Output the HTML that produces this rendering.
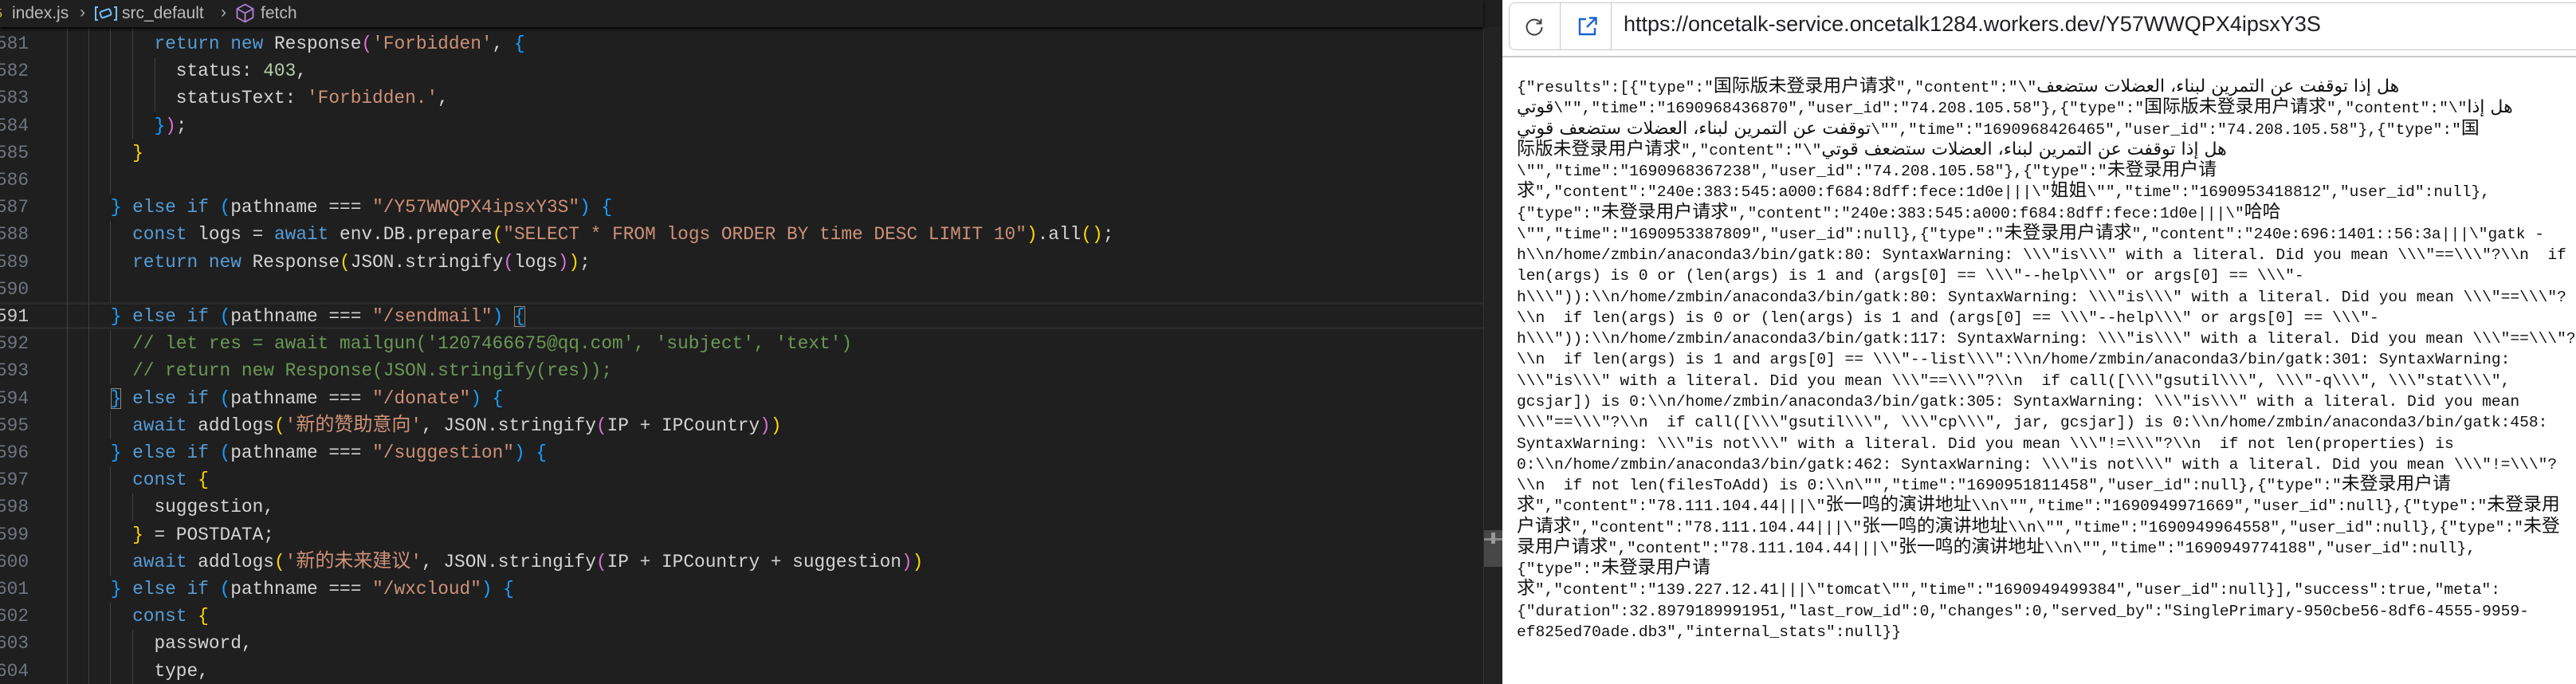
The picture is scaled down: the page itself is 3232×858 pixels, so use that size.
<!DOCTYPE html>
<html><head><meta charset="utf-8"><style>
*{margin:0;padding:0;box-sizing:border-box}
html,body{width:3232px;height:858px;overflow:hidden;background:#1f1f1f;position:relative}
.abs{position:absolute}
#tab{left:0;top:0;width:1861px;height:34px;background:#1f1f1f;box-shadow:0 2px 4px #000;z-index:2;font-family:"Liberation Sans",sans-serif;font-size:21px;color:#bbb}
#ln{left:-20px;top:38px;width:56px;text-align:right;font-family:"Liberation Mono",monospace;font-size:22.8px;line-height:34.2px;color:#6e7681;white-space:pre}
#code{left:84px;top:38px;font-family:"Liberation Mono","Noto Sans CJK SC",monospace;font-size:22.8px;line-height:34.2px;color:#d4d4d4;white-space:pre}
.g{width:1px;background:#404040}
.k{color:#569cd6}.s{color:#ce9178}.n{color:#b5cea8}.c{color:#6a9955}.y{color:#ffd700}.p{color:#da70d6}.b{color:#179fff}
.cj{font-family:"Noto Sans CJK SC",sans-serif;font-size:24px;line-height:0}
.box{outline:1.5px solid #888;outline-offset:-1px}
#br{left:1885px;top:0;width:1347px;height:858px;background:#fff}
#json{left:1903px;top:97px;font-family:"Liberation Mono","Noto Sans CJK SC",monospace;font-size:19.6px;line-height:26.27px;color:#111;white-space:pre}
#json .z{font-family:"Noto Sans CJK SC",sans-serif;font-size:22.9px;line-height:0}
#json .a{font-family:"DejaVu Sans",sans-serif;font-size:22px;line-height:0}
</style></head><body>
<div id="tab" class="abs">
 <div class="abs" style="left:-6px;top:9px;width:10px;height:16px;color:#cbcb41;font-size:16px">5</div>
 <div class="abs" style="left:15px;top:5px">index.js</div>
 <div class="abs" style="left:100px;top:4px;color:#aaa">›</div>
 <svg class="abs" style="left:119px;top:7px" width="28" height="20" viewBox="0 0 28 20"><path d="M4 2H1v16h3M24 2h3v16h-3" stroke="#75beff" stroke-width="2" fill="none"/><rect x="7" y="6" width="13" height="8" rx="2" transform="rotate(-20 13 10)" stroke="#75beff" stroke-width="2" fill="none"/></svg>
 <div class="abs" style="left:153px;top:5px">src_default</div>
 <div class="abs" style="left:277px;top:4px;color:#aaa">›</div>
 <svg class="abs" style="left:296px;top:4px" width="23" height="25" viewBox="0 0 23 25"><path d="M11.5 1.5 21.5 7v11l-10 5.5-10-5.5V7zM1.5 7l10 5.5L21.5 7M11.5 12.5v11" stroke="#b180d7" stroke-width="1.8" fill="none"/></svg>
 <div class="abs" style="left:327px;top:5px">fetch</div>
</div>
<div class="abs" style="left:0;top:379px;width:1861px;height:34px;border-top:3px solid #2a2a2a;border-bottom:3px solid #2a2a2a"></div>
<div class="abs g" style="left:84px;top:34px;height:824px"></div>
<div class="abs g" style="left:111px;top:34px;height:824px"></div>
<div class="abs g" style="left:138px;top:34px;height:209px"></div>
<div class="abs g" style="left:138px;top:277px;height:103px"></div>
<div class="abs g" style="left:138px;top:414px;height:68px"></div>
<div class="abs g" style="left:138px;top:516px;height:35px"></div>
<div class="abs g" style="left:138px;top:585px;height:137px"></div>
<div class="abs g" style="left:138px;top:756px;height:102px"></div>
<div class="abs g" style="left:166px;top:34px;height:140px"></div>
<div class="abs g" style="left:166px;top:619px;height:34px"></div>
<div class="abs g" style="left:166px;top:790px;height:68px"></div>
<div class="abs g" style="left:194px;top:72px;height:68px"></div>
<div id="ln" class="abs">581
582
583
584
585
586
587
588
589
590
<span style="color:#ccc">591</span>
592
593
594
595
596
597
598
599
600
601
602
603
604</div>
<div id="code" class="abs">        <span class="k">return</span> <span class="k">new</span> Response<span class="p">(</span><span class="s">'Forbidden'</span>, <span class="b">{</span>
          status: <span class="n">403</span>,
          statusText: <span class="s">'Forbidden.'</span>,
        <span class="b">}</span><span class="p">)</span>;
      <span class="y">}</span>

    <span class="b">}</span> <span class="k">else if</span> <span class="b">(</span>pathname === <span class="s">"/Y57WWQPX4ipsxY3S"</span><span class="b">)</span> <span class="b">{</span>
      <span class="k">const</span> logs = <span class="k">await</span> env.DB.prepare<span class="y">(</span><span class="s">"SELECT * FROM logs ORDER BY time DESC LIMIT 10"</span><span class="y">)</span>.all<span class="y">()</span>;
      <span class="k">return</span> <span class="k">new</span> Response<span class="y">(</span>JSON.stringify<span class="p">(</span>logs<span class="p">)</span><span class="y">)</span>;

    <span class="b">}</span> <span class="k">else if</span> <span class="b">(</span>pathname === <span class="s">"/sendmail"</span><span class="b">)</span> <span class="b box">{</span>
      <span class="c">// let res = await mailgun('1207466675@qq.com', 'subject', 'text')</span>
      <span class="c">// return new Response(JSON.stringify(res));</span>
    <span class="b box">}</span> <span class="k">else if</span> <span class="b">(</span>pathname === <span class="s">"/donate"</span><span class="b">)</span> <span class="b">{</span>
      <span class="k">await</span> addlogs<span class="y">(</span><span class="s">'<span class="cj">新的赞助意向</span>'</span>, JSON.stringify<span class="p">(</span>IP + IPCountry<span class="p">)</span><span class="y">)</span>
    <span class="b">}</span> <span class="k">else if</span> <span class="b">(</span>pathname === <span class="s">"/suggestion"</span><span class="b">)</span> <span class="b">{</span>
      <span class="k">const</span> <span class="y">{</span>
        suggestion,
      <span class="y">}</span> = POSTDATA;
      <span class="k">await</span> addlogs<span class="y">(</span><span class="s">'<span class="cj">新的未来建议</span>'</span>, JSON.stringify<span class="p">(</span>IP + IPCountry + suggestion<span class="p">)</span><span class="y">)</span>
    <span class="b">}</span> <span class="k">else if</span> <span class="b">(</span>pathname === <span class="s">"/wxcloud"</span><span class="b">)</span> <span class="b">{</span>
      <span class="k">const</span> <span class="y">{</span>
        password,
        type,</div>
<div class="abs" style="left:1861px;top:34px;width:24px;height:824px;background:#232323;border-left:1px solid #333"></div>
<div class="abs" style="left:1862px;top:665px;width:23px;height:46px;background:#474747"></div>
<div class="abs" style="left:1862px;top:675px;width:23px;height:3px;background:#888"></div>
<div class="abs" style="left:1871px;top:668px;width:5px;height:14px;background:#999"></div>
<div id="br" class="abs"></div>
<div class="abs" style="left:1893px;top:3px;width:1360px;height:60px;border:1.5px solid #c8c8c8;border-radius:8px;background:#fff"></div>
<div class="abs" style="left:1957px;top:4px;width:1px;height:58px;background:#c8c8c8"></div>
<div class="abs" style="left:2021px;top:4px;width:1px;height:58px;background:#c8c8c8"></div>
<div class="abs" style="left:1885px;top:70px;width:1347px;height:2px;background:#c8c8c8"></div>
<svg class="abs" style="left:1912px;top:20px" width="26" height="26" viewBox="0 0 26 26"><path d="M21 9A9.5 9.5 0 1 0 22.5 14" stroke="#444" stroke-width="2" fill="none"/><path d="M21.5 3.5V9.5H15.5" stroke="#444" stroke-width="2" fill="none"/></svg>
<svg class="abs" style="left:1979px;top:20px" width="26" height="26" viewBox="0 0 26 26"><path d="M11 4H3v19h19v-8" stroke="#1a64d6" stroke-width="2.4" fill="none"/><path d="M12 14 23 3M15 2.5h8.5V11" stroke="#1a64d6" stroke-width="2.4" fill="none"/></svg>
<div class="abs" style="left:2037px;top:15px;font-family:'Liberation Sans',sans-serif;font-size:27px;color:#202124;white-space:nowrap">https://oncetalk-service.oncetalk1284.workers.dev/Y57WWQPX4ipsxY3S</div>
<div id="json" class="abs">{"results":[{"type":"<span class="z">国际版未登录用户请求</span>","content":"\"<span class="a">هل إذا توقفت عن التمرين لبناء، العضلات ستضعف</span>
<span class="a">قوتي</span>\"","time":"1690968436870","user_id":"74.208.105.58"},{"type":"<span class="z">国际版未登录用户请求</span>","content":"\"<span class="a">هل إذا</span>
<span class="a">توقفت عن التمرين لبناء، العضلات ستضعف قوتي</span>\"","time":"1690968426465","user_id":"74.208.105.58"},{"type":"<span class="z">国</span>
<span class="z">际版未登录用户请求</span>","content":"\"<span class="a">هل إذا توقفت عن التمرين لبناء، العضلات ستضعف قوتي</span>
\"","time":"1690968367238","user_id":"74.208.105.58"},{"type":"<span class="z">未登录用户请</span>
<span class="z">求</span>","content":"240e:383:545:a000:f684:8dff:fece:1d0e|||\"<span class="z">姐姐</span>\"","time":"1690953418812","user_id":null},
{"type":"<span class="z">未登录用户请求</span>","content":"240e:383:545:a000:f684:8dff:fece:1d0e|||\"<span class="z">哈哈</span>
\"","time":"1690953387809","user_id":null},{"type":"<span class="z">未登录用户请求</span>","content":"240e:696:1401::56:3a|||\"gatk -
h\\n/home/zmbin/anaconda3/bin/gatk:80: SyntaxWarning: \\\"is\\\" with a literal. Did you mean \\\"==\\\"?\\n  if
len(args) is 0 or (len(args) is 1 and (args[0] == \\\"--help\\\" or args[0] == \\\"-
h\\\")):\\n/home/zmbin/anaconda3/bin/gatk:80: SyntaxWarning: \\\"is\\\" with a literal. Did you mean \\\"==\\\"?
\\n  if len(args) is 0 or (len(args) is 1 and (args[0] == \\\"--help\\\" or args[0] == \\\"-
h\\\")):\\n/home/zmbin/anaconda3/bin/gatk:117: SyntaxWarning: \\\"is\\\" with a literal. Did you mean \\\"==\\\"?
\\n  if len(args) is 1 and args[0] == \\\"--list\\\":\\n/home/zmbin/anaconda3/bin/gatk:301: SyntaxWarning:
\\\"is\\\" with a literal. Did you mean \\\"==\\\"?\\n  if call([\\\"gsutil\\\", \\\"-q\\\", \\\"stat\\\",
gcsjar]) is 0:\\n/home/zmbin/anaconda3/bin/gatk:305: SyntaxWarning: \\\"is\\\" with a literal. Did you mean
\\\"==\\\"?\\n  if call([\\\"gsutil\\\", \\\"cp\\\", jar, gcsjar]) is 0:\\n/home/zmbin/anaconda3/bin/gatk:458:
SyntaxWarning: \\\"is not\\\" with a literal. Did you mean \\\"!=\\\"?\\n  if not len(properties) is
0:\\n/home/zmbin/anaconda3/bin/gatk:462: SyntaxWarning: \\\"is not\\\" with a literal. Did you mean \\\"!=\\\"?
\\n  if not len(filesToAdd) is 0:\\n\"","time":"1690951811458","user_id":null},{"type":"<span class="z">未登录用户请</span>
<span class="z">求</span>","content":"78.111.104.44|||\"<span class="z">张一鸣的演讲地址</span>\\n\"","time":"1690949971669","user_id":null},{"type":"<span class="z">未登录用</span>
<span class="z">户请求</span>","content":"78.111.104.44|||\"<span class="z">张一鸣的演讲地址</span>\\n\"","time":"1690949964558","user_id":null},{"type":"<span class="z">未登</span>
<span class="z">录用户请求</span>","content":"78.111.104.44|||\"<span class="z">张一鸣的演讲地址</span>\\n\"","time":"1690949774188","user_id":null},
{"type":"<span class="z">未登录用户请</span>
<span class="z">求</span>","content":"139.227.12.41|||\"tomcat\"","time":"1690949499384","user_id":null}],"success":true,"meta":
{"duration":32.8979189991951,"last_row_id":0,"changes":0,"served_by":"SinglePrimary-950cbe56-8df6-4555-9959-
ef825ed70ade.db3","internal_stats":null}}</div>
</body></html>
